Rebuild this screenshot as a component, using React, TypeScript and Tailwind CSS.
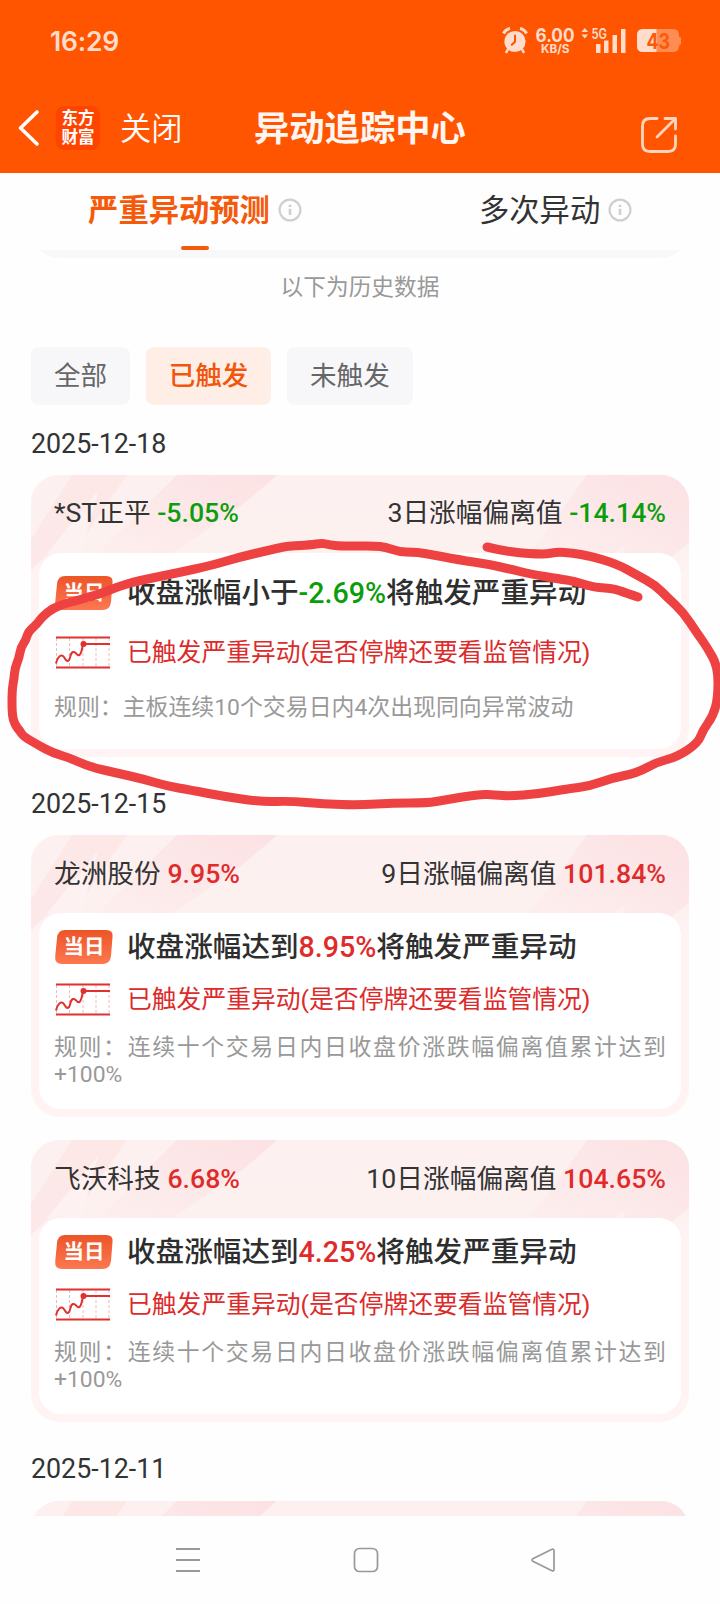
import { useId } from "react";
import { clsx } from "clsx";

type Tone = "up" | "down";

interface Stock {
  name: string;
  change: string;
  days: string;
  deviation: string;
  condition: string;
  threshold: string;
  rule: string;
  tone: Tone;
  roomy?: boolean;
}

const FILTERS = ["全部", "已触发", "未触发"];

const FIRST: Stock = {
  name: "*ST正平",
  change: "-5.05%",
  days: "3日涨幅偏离值",
  deviation: "-14.14%",
  condition: "收盘涨幅小于",
  threshold: "-2.69%",
  rule: "规则：主板连续10个交易日内4次出现同向异常波动",
  tone: "down",
  roomy: true,
};

const LONG_RULE = "规则：连续十个交易日内日收盘价涨跌幅偏离值累计达到+100%";

const SECOND: Stock[] = [
  {
    name: "龙洲股份",
    change: "9.95%",
    days: "9日涨幅偏离值",
    deviation: "101.84%",
    condition: "收盘涨幅达到",
    threshold: "8.95%",
    rule: LONG_RULE,
    tone: "up",
  },
  {
    name: "飞沃科技",
    change: "6.68%",
    days: "10日涨幅偏离值",
    deviation: "104.65%",
    condition: "收盘涨幅达到",
    threshold: "4.25%",
    rule: LONG_RULE,
    tone: "up",
  },
];

function StatusIcons() {
  return (
    <div className="flex h-[28px] items-start text-[#ffdccb]">
      <svg width="26" height="28" viewBox="0 0 26 28" fill="none">
        <path d="M1.5 6.5A9 9 0 0 1 8 1.5M24.5 6.5A9 9 0 0 0 18 1.5" stroke="currentColor" strokeWidth="3" />
        <path d="m6 22-2 4M20 22l2 4" stroke="currentColor" strokeWidth="2.6" />
        <circle cx="13" cy="14.5" r="10.6" fill="currentColor" />
        <path d="M13 8.5v6.3l-3.2 3" stroke="#ff5500" strokeWidth="2" strokeLinecap="round" />
      </svg>
      <svg width="42" height="28" viewBox="0 0 42 28" fill="currentColor" className="ml-[6px] overflow-visible">
        <text x="1.500" y="15" fontSize="18.500" fontWeight="700" textLength="39" lengthAdjust="spacingAndGlyphs">
          6.00
        </text>
        <text x="7" y="25.500" fontSize="12" fontWeight="700" textLength="28.500" lengthAdjust="spacingAndGlyphs">
          KB/S
        </text>
      </svg>
      <svg width="48" height="27" viewBox="0 0 48 27" fill="currentColor" className="ml-[4px] overflow-visible">
        <path d="m1.5 5 3.3-4 3.3 4zM1.5 7.5l3.3 4 3.3-4z" />
        <text x="11.5" y="12" fontSize="14" fontWeight="600" textLength="15.5" lengthAdjust="spacingAndGlyphs">
          5G
        </text>
        <path d="M16 17h4.5v9H16zM24 13.5h4.5V26H24zM32.5 8H37v18h-4.5zM41 2h4.5v24H41z" />
      </svg>
      <svg width="46" height="27" viewBox="0 0 46 27" className="ml-[9px]">
        <path d="M6 2H36q6 0 6 6v1.500q2 .5 2 2v5q0 1.500-2 2V19q0 6-6 6H6q-6 0-6-6V8q0-6 6-6z" fill="#ff8c52" />
        <path d="M6 2H19.500V25H6q-6 0-6-6V8q0-6 6-6z" fill="#ffdccb" />
        <text x="9.500" y="21.500" fontSize="21" fontWeight="700" fill="#fb5a06" textLength="23.500" lengthAdjust="spacingAndGlyphs">
          43
        </text>
      </svg>
    </div>
  );
}

function Header() {
  return (
    <header className="h-[173px] shrink-0 bg-[#ff5500]">
      <div className="flex h-[82px] items-center justify-between pl-[50px] pr-[37px] font-[Inter,sans-serif]">
        <span className="pt-[2px] text-[26.5px] font-semibold tracking-[-0.2px] text-[#ffdccb]">16:29</span>
        <StatusIcons />
      </div>
      <div className="flex h-[91px] items-center text-white">
        <div className="flex w-[254px] items-center pl-[17px]">
          <svg width="24" height="40" viewBox="0 0 24 40" fill="none" stroke="#fff" strokeWidth="3.6" strokeLinecap="round" strokeLinejoin="round">
            <path d="M20 4 3.500 20 20 36" />
          </svg>
          <div className="ml-[15px] flex size-[44px] flex-col items-center justify-center rounded-[8px] bg-[#ff4400] text-[16.5px] font-bold leading-[19px]">
            <span>东方</span>
            <span>财富</span>
          </div>
          <span className="ml-[20px] pt-[4px] text-[31.3px] font-[350] leading-[40px]">关闭</span>
        </div>
        <h1 className="flex-1 pt-[2px] text-[35.3px] font-bold leading-[44px] text-[#fff6f1]">异动追踪中心</h1>
        <svg width="40" height="40" viewBox="0 0 40 40" fill="none" stroke="#ffd5bd" strokeWidth="2.8" strokeLinecap="round" className="mr-[41px] mt-[14px]">
          <path d="M18 3.500h-7Q3.500 3.500 3.500 11v18q0 7.500 7.500 7.500h18q7.500 0 7.500-7.500v-8" />
          <path d="M26 3.500h10.500V14M36 4 18 22" strokeLinejoin="round" />
        </svg>
      </div>
    </header>
  );
}

function InfoIcon() {
  return (
    <svg width="24" height="24" viewBox="0 0 24 24" fill="none" stroke="#cfcfcf">
      <circle cx="12" cy="12" r="10.4" strokeWidth="2.2" />
      <path d="M12 10.800v6.200" strokeWidth="2.6" />
      <path d="M12 6.800v2.200" strokeWidth="2.6" />
    </svg>
  );
}

function Tabs() {
  return (
    <div className="flex h-[77px] shrink-0 text-[30.3px] leading-[40px]">
      <div className="flex w-[390px] flex-col items-center">
        <div className="flex h-[73px] items-center gap-[8px]">
          <span className="pt-[3px] font-bold text-[#f55a0c]">严重异动预测</span>
          <InfoIcon />
        </div>
        <div className="h-[4px] w-[28px] rounded-[2px] bg-[#f55a0c]" />
      </div>
      <div className="flex h-[73px] items-center gap-[8px] pl-[89px] text-[#333]">
        <span className="pt-[3px]">多次异动</span>
        <InfoIcon />
      </div>
    </div>
  );
}

function CardBackdrop() {
  const id = useId();
  return (
    <svg width="658" height="100" viewBox="0 0 658 100" className="absolute left-0 top-0">
      <defs>
        <linearGradient id={`${id}a`} x1="0" y1="0" x2="0" y2="1">
          <stop offset="0" stopColor="#fdf0f0" />
          <stop offset="0.75" stopColor="#fdf1f0" />
          <stop offset="1" stopColor="#fff4f3" />
        </linearGradient>
        <linearGradient id={`${id}b`} x1="1" y1="0" x2="0" y2="1">
          <stop offset="0" stopColor="#fce1e3" />
          <stop offset="1" stopColor="#fdefee" />
        </linearGradient>
        <linearGradient id={`${id}c`} x1="1" y1="0" x2="0" y2="1">
          <stop offset="0" stopColor="#fde8e6" />
          <stop offset="1" stopColor="#fce8e9" />
        </linearGradient>
      </defs>
      <path d="M0 0h658v100H0z" fill={`url(#${id}a)`} />
      <path d="M41 0h55L42 78 18 78 0 95V64z" fill={`url(#${id}c)`} />
      <path d="M67 16 50 78H16z" fill="#fdf1f1" />
      <path d="M146 0h100L214 28 142 78H67z" fill={`url(#${id}b)`} />
      <path d="M556 0h102v68l-18 14H494l26-32z" fill={`url(#${id}b)`} />
      <path d="M593 71v9h-13z" fill="#fdf1f0" />
    </svg>
  );
}

function TodayBadge() {
  const id = useId();
  return (
    <div className="relative flex h-[34px] w-[60px] items-center justify-center">
      <svg width="60" height="34" viewBox="0 0 60 34" className="absolute inset-0">
        <defs>
          <linearGradient id={id} x1="0" y1="0" x2="0" y2="1">
            <stop offset="0" stopColor="#ed5428" />
            <stop offset="1" stopColor="#fc7850" />
          </linearGradient>
        </defs>
        <path d="M11 0H52q7.500 0 6.500 7L57 26q-1 8-8.500 8H8q-7.500 0-6.800-7.500L3 8q.8-8 8-8z" fill={`url(#${id})`} />
      </svg>
      <span className="relative text-[20.5px] font-bold leading-[34px] text-white">当日</span>
    </div>
  );
}

function TrendIcon() {
  return (
    <svg width="60" height="34" viewBox="0 0 60 34" fill="none" stroke="#e0302f">
      <path d="M2.500 2v30M15.500 2v30M29 2v30M42 2v30M55 2v30" stroke="#f3b9b9" strokeDasharray="3 2" />
      <path d="M2 1.500h54M2 31.500h54" strokeWidth="2" />
      <path
        d="M2 27.500C4 20 7 18.500 9 20s3 7 6 4c2-3 1-7 4-8s3.500 4 6 3.200C28 18 27.500 12 29.500 8H56"
        strokeWidth="2"
      />
      <circle cx="29.500" cy="8" r="3" fill="#e0302f" stroke="none" />
    </svg>
  );
}

function StockCard({ stock }: { stock: Stock }) {
  const color = stock.tone === "up" ? "text-[#e02b2b]" : "text-[#0c9d0c]";

  return (
    <article className="relative h-[282px] shrink-0 overflow-hidden rounded-[28px] bg-[#fff4f3] px-[8px] pb-[8px]">
      <CardBackdrop />
      <div
        className={clsx(
          "relative flex h-[78px] items-center justify-between px-[15px] text-[26.7px] leading-[36px] text-[#333]",
          stock.roomy ? "pb-[2px]" : "pb-0"
        )}
      >
        <div>
          {stock.name} <span className={clsx("font-medium", color)}>{stock.change}</span>
        </div>
        <div>
          {stock.days} <span className={clsx("font-medium", color)}>{stock.deviation}</span>
        </div>
      </div>
      <div
        className={clsx(
          "relative h-[196px] rounded-[22px] bg-white px-[15px]",
          stock.roomy ? "pt-[23px]" : "pt-[17px]"
        )}
      >
        <div className="flex h-[34px] items-center gap-[13px]">
          <TodayBadge />
          <div className="pb-[1px] text-[28.6px] font-medium leading-[34px] whitespace-nowrap text-[#2e2e2e]">
            {stock.condition}
            <span className={color}>{stock.threshold}</span>
            将触发严重异动
          </div>
        </div>
        <div className={clsx("flex h-[34px] items-center gap-[13px]", stock.roomy ? "mt-[26px]" : "mt-[19px]")}>
          <TrendIcon />
          <div className="pb-[1px] text-[24.8px] leading-[34px] whitespace-nowrap text-[#dc2b2b]">
            已触发严重异动(是否停牌还要看监管情况)
          </div>
        </div>
        <p
          className={clsx(
            "text-justify text-[22.9px] leading-[27px] text-[#999]",
            stock.roomy ? "mt-[24px]" : "mt-[17px]"
          )}
        >
          {stock.rule}
        </p>
      </div>
    </article>
  );
}

function DateLabel({ children }: { children: string }) {
  return <h2 className="text-[26.8px] leading-[36px] text-[#333]">{children}</h2>;
}

function NavBar() {
  return (
    <nav className="flex h-[88px] shrink-0 items-center justify-between bg-[#fefefe] pl-[175px] pr-[164px]">
      <svg width="26" height="26" viewBox="0 0 26 26" stroke="#999" strokeWidth="1.800">
        <path d="M1 2h24M1 13h24M1 24h24" />
      </svg>
      <svg width="26" height="26" viewBox="0 0 26 26" fill="none" stroke="#999" strokeWidth="1.700">
        <rect x="1.500" y="1.500" width="23" height="23" rx="5" />
      </svg>
      <svg width="26" height="26" viewBox="0 0 26 26" fill="none" stroke="#999" strokeWidth="1.700" strokeLinejoin="round">
        <path d="M22 2.200 2.800 11.800q-1.600 1.200 0 2.400L22 23.800q2 .6 2-1.500V3.700q0-2-2-1.500z" />
      </svg>
    </nav>
  );
}

const LOOP_POINTS =
  "638,597 626,593 615,589 605,588 593,587 573,581 560,579 530,574 510,569 487,564 460,560 423,553 412,552 400,552 385,547 375,546 360,546 340,546 330,545 322,543 310,545 290,546 283,547 270,550 240,557 213,565 177,573 137,581 117,587 97,595 67,603 53,608 42,617 37,624 28,632 26,640 21,647 19,658 15,668 14,679 12,690 12,715 15,725 20,731 23,736 38,745 53,753 70,758 90,767 117,773 143,779 167,786 190,790 227,797 263,802 290,801 323,804 360,805 393,803 427,803 445,800 480,794 495,795 510,796 537,794 567,789 590,786 612,778 637,773 657,762 677,757 698,743 703,730 713,716 718,698 718,667 707,647 697,633 683,612 667,597 655,585 637,575 617,564 590,556 572,553 557,552 547,554 537,554 520,553 500,550 487,547";

// Joins the midpoints with quadratic curves so the stroke has no corners
function smoothPath(points: string) {
  const pts = points.split(" ").map((p) => p.split(",").map(Number));
  const last = pts[pts.length - 1];
  let d = `M${pts[0][0]} ${pts[0][1]}`;
  for (let i = 1; i < pts.length - 1; i++) {
    const [x, y] = pts[i];
    const [nx, ny] = pts[i + 1];
    d += `Q${x} ${y} ${(x + nx) / 2} ${(y + ny) / 2}`;
  }
  return `${d}L${last[0]} ${last[1]}`;
}

// Freehand marker loop around the first card
function MarkerLoop() {
  return (
    <svg
      width="720"
      height="1604"
      viewBox="0 0 720 1604"
      fill="none"
      className="pointer-events-none absolute left-0 top-0"
    >
      <path
        stroke="#ee4242"
        strokeWidth="9"
        strokeLinecap="round"
        strokeLinejoin="round"
        d={smoothPath(LOOP_POINTS)}
      />
    </svg>
  );
}

export default function App() {
  return (
    <div className="relative flex h-[1604px] w-[720px] flex-col overflow-hidden bg-[#fefefe] font-[Roboto,'Noto_Sans_CJK_SC',sans-serif]">
      <Header />
      <Tabs />
      <main className="flex min-h-0 flex-1 flex-col overflow-hidden px-[31px]">
        <div className="flex h-[8px] shrink-0 flex-col justify-end overflow-hidden">
          <div className="h-[56px] shrink-0 rounded-[28px] bg-[#f7f8fa]" />
        </div>
        <p className="mt-[14px] text-center text-[22.7px] leading-[32px] text-[#999]">以下为历史数据</p>
        <div className="mt-[43px] flex shrink-0 gap-[15.500px]">
          {FILTERS.map((label) => (
            <button
              key={label}
              className={clsx(
                "h-[58px] rounded-[8px] px-[23px] pb-[1px] text-[26.6px] leading-[56px]",
                label === "已触发" ? "bg-[#ffeee6] font-medium text-[#f0560c]" : "bg-[#f7f7fa] text-[#666]"
              )}
            >
              {label}
            </button>
          ))}
        </div>
        <div className="mt-[21px] flex flex-col gap-[13px]">
          <DateLabel>2025-12-18</DateLabel>
          <StockCard stock={FIRST} />
        </div>
        <div className="mt-[29px] flex flex-col gap-[13px]">
          <DateLabel>2025-12-15</DateLabel>
          <div className="flex flex-col gap-[23px]">
            {SECOND.map((stock) => (
              <StockCard key={stock.name} stock={stock} />
            ))}
          </div>
        </div>
        <div className="mt-[29px] flex flex-col gap-[14px]">
          <DateLabel>2025-12-11</DateLabel>
          <div className="relative h-[282px] shrink-0 overflow-hidden rounded-[28px] bg-[#fff4f3]">
            <CardBackdrop />
          </div>
        </div>
      </main>
      <NavBar />
      <MarkerLoop />
    </div>
  );
}
